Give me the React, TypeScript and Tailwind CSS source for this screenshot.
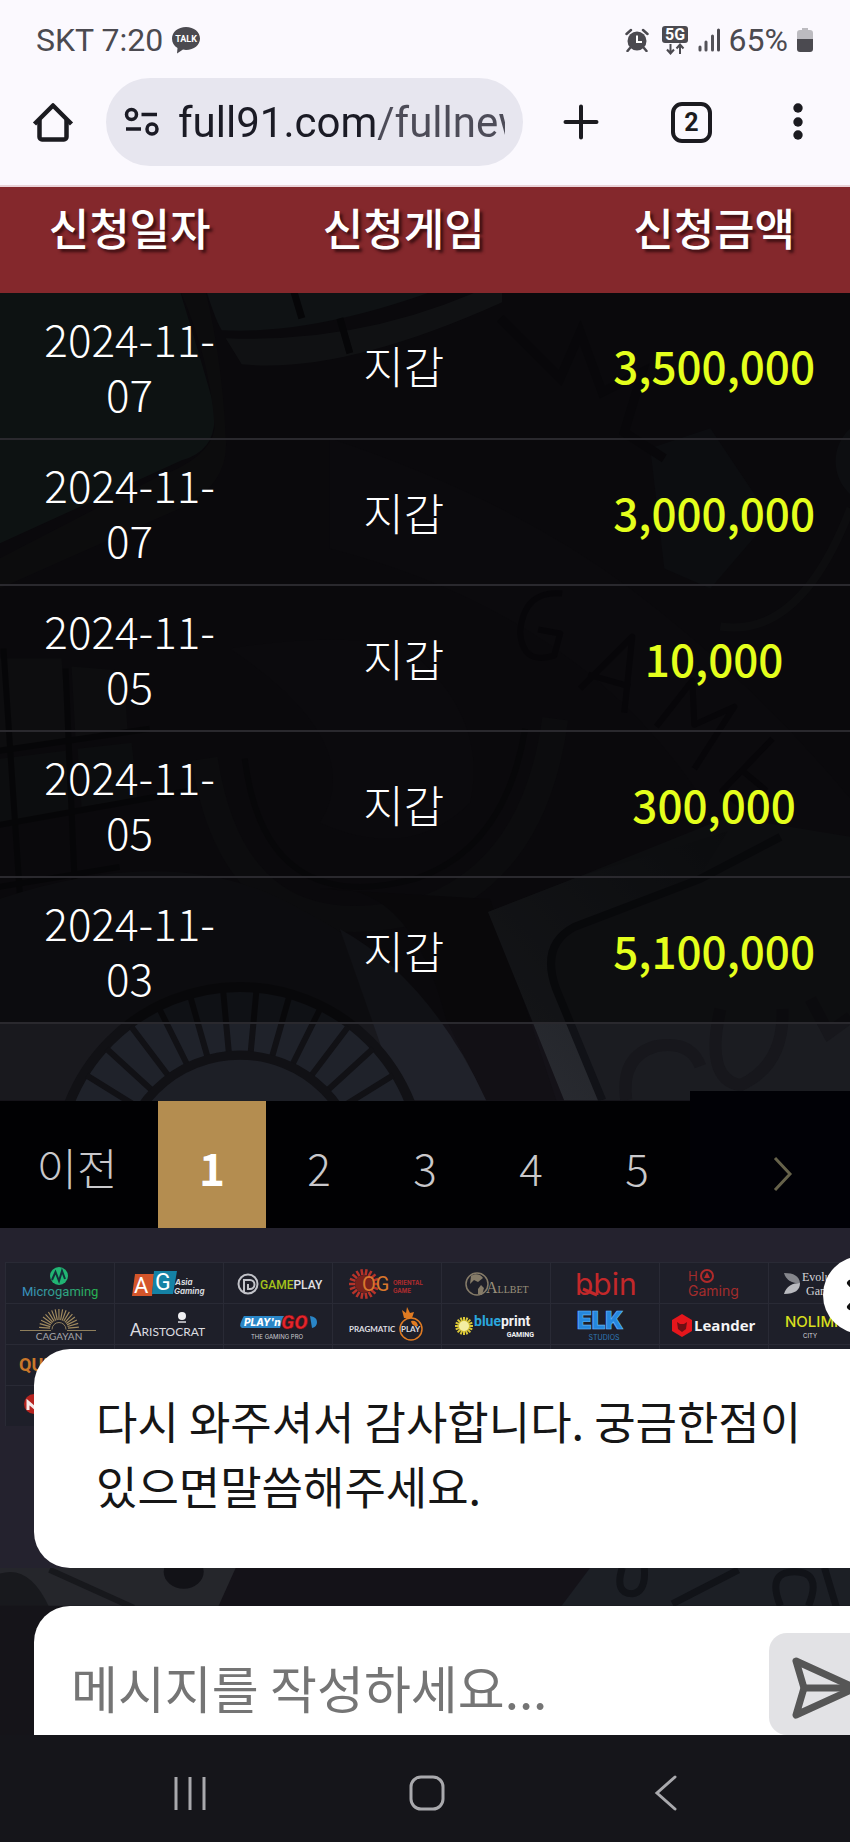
import { memo } from 'react';
import type React from 'react';

interface RequestRow {
  id: number;
  date: string;
  game: string;
  amount: string;
}

const rows: RequestRow[] = [
  { id: 1, date: '2024-11-07', game: '지갑', amount: '3,500,000' },
  { id: 2, date: '2024-11-07', game: '지갑', amount: '3,000,000' },
  { id: 3, date: '2024-11-05', game: '지갑', amount: '10,000' },
  { id: 4, date: '2024-11-05', game: '지갑', amount: '300,000' },
  { id: 5, date: '2024-11-03', game: '지갑', amount: '5,100,000' },
];

const pages = [2, 3, 4, 5];

const rays = (count: number, cx: number, cy: number, inner: number, outer: number, from = 0, to = 360) =>
  Array.from({ length: count }, (_, i) => {
    const a = ((from + ((to - from) * i) / count) * Math.PI) / 180;
    const c = Math.cos(a);
    const s = Math.sin(a);
    return `M${(cx + inner * c).toFixed(1)} ${(cy + inner * s).toFixed(1)}L${(cx + outer * c).toFixed(1)} ${(cy + outer * s).toFixed(1)}`;
  }).join('');

/* ---------- status bar ---------- */

const StatusBar = memo(() => (
  <div className="flex h-[68px] items-center px-9 pt-3 font-['Roboto',sans-serif] text-[32px] text-[#4b4a50]">
    <span>SKT 7:20</span>
    <svg className="ml-2 h-7 w-[30px]" viewBox="0 0 30 28" aria-label="TALK" role="img">
      <path d="M15 1C7 1 1 6 1 12.500c0 4 2 7.500 5.500 9.500L6 27.500l6-4 3 .5c8 0 14-5 14-11.500S23 1 15 1Z" fill="#4b4a50" />
      <text x="15" y="16" fontSize="9" fontWeight="700" textAnchor="middle" fill="#fff">
        TALK
      </text>
    </svg>
    <div className="ml-auto flex items-center">
      <svg className="h-6 w-6" viewBox="0 0 24 24" aria-hidden="true" fill="none" stroke="#4b4a50">
        <circle cx="12" cy="13" r="9.500" fill="#4b4a50" stroke="none" />
        <path d="M1.500 6 6 2M22.500 6 18 2" strokeWidth="2.500" strokeLinecap="round" />
        <path d="m5 20-2.500 3M19 20l2.500 3" strokeWidth="2.500" strokeLinecap="round" />
        <path d="M12 7.500V14h5" stroke="#fff" strokeWidth="2" />
      </svg>
      <svg className="ml-3 h-[30px] w-7" viewBox="0 0 28 30" aria-label="5G" role="img">
        <rect x="1" y="1" width="26" height="17" rx="3" fill="#4b4a50" />
        <text x="14" y="15" fontSize="16" fontWeight="700" textAnchor="middle" fill="#fff">
          5G
        </text>
        <path d="M9.500 19v9m-3.500-3.500 3.500 4 3.500-4M19 29v-9m-3.500 3.500 3.500-4 3.500 4" fill="none" stroke="#4b4a50" strokeWidth="2" />
      </svg>
      <svg className="ml-2 h-6 w-6" viewBox="0 0 24 24" aria-hidden="true" stroke="#4b4a50" strokeWidth="3" strokeLinecap="round">
        <path d="M3 19v3M9 14v8M15.500 8v14" strokeOpacity=".95" />
        <path d="M21.500 2v20" />
      </svg>
      <span className="ml-2">65%</span>
      <svg className="ml-2 h-6 w-[18px]" viewBox="0 0 18 24" aria-hidden="true">
        <path d="M6 0h6v2h2a3 3 0 0 1 3 3v7H1V5a3 3 0 0 1 3-3h2Z" fill="#bcbbc0" />
        <path d="M1 11h16v10a3 3 0 0 1-3 3H4a3 3 0 0 1-3-3Z" fill="#4b4a50" />
      </svg>
    </div>
  </div>
));

StatusBar.displayName = 'StatusBar';

/* ---------- browser toolbar ---------- */

const BrowserBar = memo(() => (
  <div className="flex items-center pt-[10px] pr-9 pb-[19px] pl-8">
    <button type="button" aria-label="홈" className="shrink-0">
      <svg className="size-[42px]" viewBox="0 0 42 42" fill="none" stroke="#1b1b20" strokeWidth="4.500">
        <path d="M2.500 23 21 4.500 39.500 23" strokeLinejoin="round" />
        <path d="M7.500 18.500V36a2.500 2.500 0 0 0 2.500 2.500h22a2.500 2.500 0 0 0 2.500-2.500V18.500" />
      </svg>
    </button>
    <label className="ml-8 flex h-[88px] min-w-0 flex-1 items-center rounded-full bg-[#e7e6ef] pr-[18px] pl-[18px]">
      <svg className="h-[30px] w-9 shrink-0" viewBox="0 0 36 30" fill="none" stroke="#1b1b25" strokeWidth="3.500" aria-hidden="true">
        <circle cx="7.500" cy="7.500" r="5" />
        <path d="M17.500 7.500H33M2 22h15" />
        <circle cx="28" cy="22" r="5" />
      </svg>
      <input
        type="text"
        aria-label="주소"
        defaultValue="full91.com/fullnew"
        className="ml-[18px] w-full min-w-0 bg-[linear-gradient(90deg,#1b1b25_197px,#4d4c58_202px)] bg-clip-text font-['Roboto',sans-serif] text-[42px] text-transparent outline-none"
      />
    </label>
    <button type="button" aria-label="새 탭" className="ml-10 shrink-0">
      <svg className="size-9" viewBox="0 0 36 36" stroke="#1b1b20" strokeWidth="4" strokeLinecap="round">
        <path d="M18 2.500v31M2.500 18h31" />
      </svg>
    </button>
    <button
      type="button"
      className="ml-[72px] flex size-[41px] shrink-0 items-center justify-center rounded-[11px] border-4 border-[#1b1b20] font-['Roboto',sans-serif] text-[25px] leading-none font-bold text-[#1b1b20]"
    >
      2
    </button>
    <button type="button" aria-label="메뉴" className="ml-[72px] shrink-0">
      <svg className="h-10 w-[30px]" viewBox="0 0 30 40" fill="#1b1b20">
        <circle cx="14" cy="6" r="4.700" />
        <circle cx="14" cy="20" r="4.700" />
        <circle cx="14" cy="33" r="4.700" />
      </svg>
    </button>
  </div>
));

BrowserBar.displayName = 'BrowserBar';

/* ---------- page artwork behind everything ---------- */

const Backdrop = memo(() => (
  <svg
    className="absolute inset-0 h-full w-full"
    viewBox="0 187 850 1548"
    preserveAspectRatio="xMidYMin slice"
    aria-hidden="true"
  >
    <defs>
      <linearGradient id="card-edge" x1="0" x2="1" y1="1" y2="0">
        <stop stopColor="#2b2d33" />
        <stop offset="1" stopColor="#17191d" />
      </linearGradient>
    </defs>
    <rect y="187" width="850" height="1548" fill="#141218" />
    <path d="M0 260h170q25 80 42 140 12 50-30 62L0 545Z" fill="#1b2425" />
    <path d="M170 270q40 80 45 160-4 30-60 50L0 560v30l180-80q50-24 46-70-4-90-26-170Z" fill="#19181b" />
    <path d="M200 270q14 50 22 62 110 6 270-62Z" fill="#1e2428" />
    <path d="m226 340 16 26q100 10 260-62v-22q-130 64-276 58Z" fill="#212327" />
    <path d="m290 280 12 40m38 0 10 35" stroke="#0c0c10" strokeWidth="7" />
    <path d="m650 450 60-20 60 90-60 70-46-20Z" fill="#181a20" />
    <path d="M850 430a44 44 0 0 0 0 66Z" fill="#1b1d23" />
    <path d="m500 320 60 60 20-46 22 60 40-20-18 60 40 26" fill="none" stroke="#100f14" strokeWidth="9" />
    <path d="M850 510q-50 130-130 118" fill="none" stroke="#1b1b1f" strokeWidth="8" />
    <path d="M330 440q180 60 300 150t220 210v100q-70-10-130-70-120-210-390-280Z" fill="#16141a" />
    <g fill="none" stroke="#0e0c12" strokeWidth="6" strokeLinejoin="round">
      <path d="M562 595q-38-4-42 38 2 34 34 24l6-22-22-4" />
      <path d="m580 690 52-52-8 76m-36-38 42 12" />
      <path d="m656 728 36-46 2 44 40-18-40 62" />
      <path d="m772 740-50 52 34 26m-14-46 24 20" />
    </g>
    <path d="M230 650q80-14 170-6 90 70 70 160-60 60-150 20 50-80-90-174Z" fill="#16141a" />
    <path d="M205 760q30 200 220 150 110-40 130-190" fill="none" stroke="#18181c" strokeWidth="26" />
    <path d="M245 760q20 160 170 120 90-30 110-150" fill="none" stroke="#0f0e12" strokeWidth="6" />
    <path d="M0 660h62l6 82-68 10ZM72 668l52 4 4 60-52 8Z" fill="#1a1a1e" />
    <path d="M0 760 66 752l4 64-70 10ZM78 750l54-6 6 56-56 8Z" fill="#191a1e" />
    <g stroke="#0d0d10" strokeWidth="6" fill="none">
      <path d="M4 650 28 1010M66 670l14 330" />
      <path d="m0 752 150-22M0 826l190-34M0 888l120-20" />
    </g>
    <path d="M0 1101V900q180-60 300 10 120 60 190 191Z" fill="#19191e" />
    <path d="M320 890q90-10 126 130l40 81h70L490 900Z" fill="#121015" />
    <path d="M340 930q90 50 146 171H400Z" fill="#20222a" />
    <circle cx="240" cy="1171" r="183" fill="#1f222a" stroke="#111115" strokeWidth="10" />
    <path d={rays(34, 240, 1171, 118, 180)} stroke="#111115" strokeWidth="6" />
    <circle cx="240" cy="1175" r="119" fill="#1d1f26" stroke="#111115" strokeWidth="9" />
    <path d="m488 913 90-35 150-60 122 20v263H570Z" fill="#1b1c21" />
    <path d="m488 913 90-35 150-46-30 48-130 50q-30 16-10 60l44 111h-38Z" fill="url(#card-edge)" />
    <path d="m780 838-80 42-126 48q-34 18-18 62l46 111" fill="none" stroke="#111217" strokeWidth="8" />
    <g fill="none" stroke="#17171c" strokeWidth="12">
      <path d="M626 1101q-6-44 30-54 34-6 44 20" />
      <path d="M720 1010q-16 70 20 76 44-20 42-76" />
      <path d="m810 1000 18 34 22-16" />
    </g>
    <path d="M0 1568h236l-18 40H0Z" fill="#25262b" />
    <path d="M0 1574q30-10 50 34H0Z" fill="#18191d" />
    <path d="m50 1570 84 38" stroke="#17181c" strokeWidth="6" />
    <ellipse cx="184" cy="1572" rx="20" ry="17" fill="#121217" />
    <path d="M590 1568h260v40H560Z" fill="#1c1f25" />
    <path d="M622 1568q-8 26 10 26 14-2 12-26M738 1570l-66 34M780 1606q-14-34 14-34t14 34M824 1568l12 40" fill="none" stroke="#111318" strokeWidth="7" />
    <path d="M0 1606h850v129H0Z" fill="#151419" />
  </svg>
));

Backdrop.displayName = 'Backdrop';

/* ---------- request history ---------- */

const HistoryTable = memo(() => (
  <table className="relative w-full table-fixed border-collapse text-center text-[44px] leading-[55px]">
    <colgroup>
      <col className="w-[30.5%]" />
      <col className="w-[34%]" />
      <col />
    </colgroup>
    <thead>
      <tr className="h-[107px] border-t-2 border-[#e9d3d8] bg-[#84282c] align-top text-white [text-shadow:3px_3px_3px_#3d0f12]">
        <th scope="col" className="pt-[13px] font-medium">
          신청일자
        </th>
        <th scope="col" className="pt-[13px] font-medium">
          신청게임
        </th>
        <th scope="col" className="pt-[13px] pl-[30px] font-medium">
          신청금액
        </th>
      </tr>
    </thead>
    <tbody className="bg-black/50">
      {rows.map((row) => (
        <tr key={row.id} className="h-[146px] border-b-2 border-[#2a292e]">
          <td className="px-10 font-light text-white">{row.date}</td>
          <td className="font-light text-white">{row.game}</td>
          <td className="pl-[30px] font-medium text-[#e4ff1c]">{row.amount}</td>
        </tr>
      ))}
    </tbody>
  </table>
));

HistoryTable.displayName = 'HistoryTable';

const Pagination = memo(() => (
  <nav aria-label="페이지" className="relative mt-[67px] flex items-end text-[44px] font-light text-[#c9c8cb]">
    <div className="flex h-[127px] flex-1 items-stretch bg-[#010103]">
      <a href="#prev" className="flex w-[158px] items-center justify-center pt-1 pr-1">
        이전
      </a>
      <a href="#1" aria-current="page" className="flex w-[108px] items-center justify-center bg-[#b48d50] pt-1 font-bold text-white">
        1
      </a>
      {pages.map((page) => (
        <a key={page} href={`#${page}`} className="flex w-[106px] items-center justify-center pt-1">
          {page}
        </a>
      ))}
    </div>
    <a href="#next" aria-label="다음" className="flex h-[137px] w-[162px] items-center justify-center bg-[#010106] pt-7 pl-[26px]">
      <svg className="h-9 w-6" viewBox="0 0 24 36" fill="none" stroke="#66624a" strokeWidth="3">
        <path d="m4 2 15 16L4 34" />
      </svg>
    </a>
  </nav>
));

Pagination.displayName = 'Pagination';

/* ---------- provider logos ---------- */

interface LogoProps {
  name: string;
  children?: React.ReactNode;
}

const Logo = ({ name, children }: LogoProps) => (
  <li className="h-[41px] border-t border-l border-[#292a35]">
    <svg className="h-[41px] w-[109px]" viewBox="0 0 109 41" role="img" aria-label={name}>
      {children}
    </svg>
  </li>
);

const sans = 'Roboto, sans-serif';
const wide = 'Inter, sans-serif';
const serif = '"Liberation Serif", serif';
const lato = 'Lato, sans-serif';

const ProviderLogos = memo(() => (
  <ul className="grid w-max grid-cols-[repeat(8,109px)] bg-[#1e1f29]">
    <Logo name="Microgaming">
      <defs>
        <linearGradient id="mg">
          <stop stopColor="#3a8fc4" />
          <stop offset="1" stopColor="#27b34c" />
        </linearGradient>
      </defs>
      <circle cx="53" cy="13" r="9" fill="#21b573" />
      <path d="m46 17 3.500-8 3.500 9 3-10 3 8" fill="none" stroke="#14303a" strokeWidth="2" />
      <text x="16" y="33" fontSize="13" fontFamily={sans} fill="url(#mg)">
        Microgaming
      </text>
    </Logo>
    <Logo name="Asia Gaming">
      <path d="M20 11h19l-2 22H17Z" fill="#d4552a" />
      <path d="M39 8h23l-4 23H37Z" fill="#1582a5" />
      <text x="19" y="30" fontSize="22" fontFamily={sans} fill="#fff">
        A
      </text>
      <text x="40" y="27" fontSize="23" fontFamily={sans} fill="#fff">
        G
      </text>
      <g fontSize="8" fontWeight="700" fontStyle="italic" fontFamily={wide} fill="#d7d9de">
        <text x="60" y="22">
          Asia
        </text>
        <text x="59" y="31">
          Gaming
        </text>
      </g>
    </Logo>
    <Logo name="Gameplay">
      <circle cx="24" cy="21" r="9.500" fill="none" stroke="#c2c3c9" strokeWidth="2" />
      <path d="M20 29V17h6a4 4 0 0 1 0 9h-2v-5" fill="none" stroke="#c2c3c9" strokeWidth="2" />
      <text x="36" y="26" fontSize="12" fontWeight="500" fontFamily={sans} fill="#a5c41b">
        GAME
        <tspan fill="#e0e0e4">PLAY</tspan>
      </text>
    </Logo>
    <Logo name="Oriental Game">
      <path d={rays(18, 31, 21, 9, 15)} stroke="#b8332a" strokeWidth="2.500" />
      <circle cx="31" cy="21" r="9" fill="#7a221c" />
      <text x="29" y="28" fontSize="20" fontFamily={sans} fill="#d9772c">
        OG
      </text>
      <g fontSize="6" fontWeight="700" fontFamily={wide} fill="#b02c2e">
        <text x="60" y="22">
          ORIENTAL
        </text>
        <text x="60" y="30">
          GAME
        </text>
      </g>
    </Logo>
    <Logo name="Allbet">
      <circle cx="35" cy="21" r="11" fill="none" stroke="#857b68" strokeWidth="1.500" />
      <path d="M29 13c4-3 10-2 12 2l-5 4-4-2-4 4ZM36 26l3-4 3 3-2 7-4-1Z" fill="#857b68" />
      <text x="44" y="30" fontFamily={serif} fill="#9b917b">
        <tspan fontSize="16">A</tspan>
        <tspan fontSize="10">LLBET</tspan>
      </text>
    </Logo>
    <Logo name="bbin">
      <text x="24" y="32" fontSize="30" fontFamily={wide} fill="#c3282a">
        bbin
      </text>
      <path d="M32 26 46 32" stroke="#c3282a" strokeWidth="3" />
    </Logo>
    <Logo name="HO Gaming">
      <g fontFamily={wide} fill="#a32c2c">
        <text x="28" y="18" fontSize="13">
          H
        </text>
        <text x="28" y="33" fontSize="14">
          Gaming
        </text>
      </g>
      <circle cx="47" cy="13" r="6" fill="none" stroke="#b02a2a" strokeWidth="2" />
      <path d="m47 9 3 6h-6Z" fill="#b02a2a" />
    </Logo>
    <Logo name="Evolution Gaming">
      <path d="M15 10c10 0 15 3 16 10-6 1-14-2-16-10Z" fill="#85868c" />
      <path d="M31 20c0 7-5 11-16 11 2-8 9-11 16-11Z" fill="#b9babf" />
      <g fontSize="12" fontFamily={serif} fill="#d5d5d8">
        <text x="33" y="18">
          Evolution
        </text>
        <text x="37" y="32">
          Gaming
        </text>
      </g>
    </Logo>

    <Logo name="Cagayan">
      <path d={rays(17, 53, 25, 9, 20, 185, 365)} stroke="#a08a5e" strokeWidth="1.200" />
      <path d="M46 25.500a7 7 0 0 1 14 0M14 26.500h31M61 26.500h29" fill="none" stroke="#8f7f5c" />
      <text x="53" y="36" fontSize="10" textAnchor="middle" fontFamily={lato} fill="#a5a6ab">
        CAGAYAN
      </text>
    </Logo>
    <Logo name="Aristocrat">
      <text x="15" y="32" fontSize="12" fontFamily={lato} fill="#dcdce0">
        <tspan fontSize="17">A</tspan>RISTOCRAT
      </text>
      <circle cx="67" cy="12" r="4" fill="#f0f0f2" />
      <path d="M63 18h8" stroke="#dcdce0" strokeWidth="1.500" />
    </Logo>
    <Logo name="Play'n GO">
      <path d="M20 12h40l-4 12H18q-3-1-1-6t3-6Z" fill="#2a86c7" />
      <path d="M86 12q7 1 7 6t-5 6Z" fill="#2a86c7" />
      <text x="20" y="22" fontSize="10" fontWeight="800" fontStyle="italic" fontFamily={wide} fill="#fff">
        PLAY'n
      </text>
      <text x="57" y="25" fontSize="20" fontWeight="900" fontStyle="italic" fontFamily={sans} fill="#e5252b" stroke="#5c0c10" strokeWidth=".5">
        GO
      </text>
      <text x="27" y="35" fontSize="6" fontFamily={wide} fill="#c9cacf">
        THE GAMING PRO
      </text>
    </Logo>
    <Logo name="Pragmatic Play">
      <g fontSize="8" fontWeight="700" fontFamily={lato} fill="#dedee2">
        <text x="16" y="28">
          PRAGMATIC
        </text>
        <text x="68" y="28">
          PLAY
        </text>
      </g>
      <circle cx="78" cy="25" r="11" fill="none" stroke="#e07b22" strokeWidth="1.500" />
      <path d="m69 6 4 3 1-6 3 6 4-1-2 6h-8Z" fill="#e07b22" />
      <path d="M78 17q6-1 7 5-6 1-7-5Z" fill="#e07b22" />
    </Logo>
    <Logo name="Blueprint Gaming">
      <path d={rays(16, 22, 22, 4, 9)} stroke="#d9c637" strokeWidth="2" />
      <circle cx="22" cy="22" r="5" fill="#f3eda2" />
      <text x="32" y="22" fontSize="14" fontWeight="700" fontFamily={sans} fill="#2ba6dc">
        blue
        <tspan fill="#f1f1f4">print</tspan>
      </text>
      <text x="92" y="33" fontSize="7" fontWeight="700" textAnchor="end" fontFamily={sans} fill="#f1f1f4">
        GAMING
      </text>
    </Logo>
    <Logo name="ELK Studios">
      <text x="26" y="25" fontSize="24" fontWeight="900" fontFamily={wide} fill="#2587dd" stroke="#63b8ff" strokeWidth=".7">
        ELK
      </text>
      <text x="53" y="36" fontSize="7" textAnchor="middle" fontFamily={wide} fill="#2f79b8">
        STUDIOS
      </text>
    </Logo>
    <Logo name="Leander">
      <path d="m22 10 10 6v11l-10 6-10-6V16Z" fill="#e5161c" />
      <path d="m17 18 3 2h4l3-2-1 7-4 3-4-3Z" fill="#6d0f14" />
      <text x="34" y="27" fontSize="15" fontWeight="700" fontFamily={'"Open Sans", sans-serif'} fill="#f4f4f6">
        Leander
      </text>
    </Logo>
    <Logo name="Nolimit City">
      <text x="16" y="23" fontSize="15" fontWeight="500" fontFamily={wide} fill="#d7de1e">
        NOLIMIT
      </text>
      <text x="34" y="34" fontSize="6" fontFamily={wide} fill="#dadade">
        CITY
      </text>
    </Logo>

    <Logo name="Quickspin">
      <text x="13" y="26" fontSize="18" fontWeight="700" fontFamily={sans} fill="#c9772a">
        QUICKSPIN
      </text>
    </Logo>
    {['a', 'b', 'c', 'd', 'e', 'f', 'g'].map((key) => (
      <li key={key} className="border-t border-l border-[#292a35]" />
    ))}
    <Logo name="Netent">
      <circle cx="28" cy="18" r="10" fill="#b5231f" />
      <path d="M22 24v-8l8 7v-9" fill="none" stroke="#f5e9e9" strokeWidth="3" />
    </Logo>
    {['h', 'i', 'j', 'k', 'l', 'm', 'n'].map((key) => (
      <li key={key} className="border-t border-l border-[#292a35]" />
    ))}
  </ul>
));

ProviderLogos.displayName = 'ProviderLogos';

/* ---------- chat widget ---------- */

const ChatWidget = memo(() => (
  <section aria-label="채팅" className="absolute right-0 bottom-0 left-[34px]">
    <button
      type="button"
      aria-label="닫기"
      className="absolute -top-[93px] -right-[51px] flex size-[78px] items-center justify-center rounded-full bg-white"
    >
      <svg className="size-8" viewBox="0 0 32 32" stroke="#111" strokeWidth="6" strokeLinecap="round">
        <path d="m4 4 24 24M28 4 4 28" />
      </svg>
    </button>
    <p className="h-[219px] rounded-l-[36px] bg-white pt-[39px] pr-8 pl-[62px] text-[45px] leading-[65px] break-keep text-[#161616]">
      다시 와주셔서 감사합니다. 궁금한점이 있으면말씀해주세요.
    </p>
    <form className="mt-[38px] flex h-[129px] items-end rounded-tl-[36px] bg-white pl-[37px]">
      <input
        type="text"
        aria-label="메시지"
        placeholder="메시지를 작성하세요..."
        className="h-[97px] min-w-0 flex-1 text-[51px] text-[#161616] outline-none placeholder:text-[#757575]"
      />
      <button
        type="button"
        aria-label="보내기"
        className="flex h-[102px] w-[81px] items-center overflow-hidden rounded-l-[18px] bg-[#e2e2e5] pt-2 pl-[22px]"
      >
        <svg className="size-16 shrink-0" viewBox="0 0 64 64" fill="none" stroke="#565656" strokeWidth="7" strokeLinejoin="round" strokeLinecap="round">
          <path d="M5 5 64 32 5 59l8-27Z" />
          <path d="M13 32h48" />
        </svg>
      </button>
    </form>
  </section>
));

ChatWidget.displayName = 'ChatWidget';

const SystemNav = memo(() => (
  <nav aria-label="시스템" className="flex flex-1 items-center justify-between bg-[#15151a] pt-2 pr-[165px] pl-[168px]">
    <button type="button" aria-label="최근 앱">
      <svg className="h-9 w-11" viewBox="0 0 44 36" stroke="#a9a9ad" strokeWidth="3">
        <path d="M8 2v33M22 2v33M36 2v33" />
      </svg>
    </button>
    <button type="button" aria-label="홈 화면">
      <svg className="size-9" viewBox="0 0 36 36" fill="none" stroke="#a9a9ad" strokeWidth="3">
        <rect x="2" y="2" width="32" height="32" rx="10" />
      </svg>
    </button>
    <button type="button" aria-label="뒤로">
      <svg className="h-9 w-11" viewBox="0 0 44 36" fill="none" stroke="#a9a9ad" strokeWidth="3" strokeLinecap="round">
        <path d="M34 2 16 18l18 16" />
      </svg>
    </button>
  </nav>
));

SystemNav.displayName = 'SystemNav';

export default function App() {
  return (
    <div className="flex min-h-screen flex-col bg-[#15151a] font-['Noto_Sans_CJK_KR',sans-serif]">
      <header className="bg-[#fbf9fe]">
        <StatusBar />
        <BrowserBar />
      </header>
      <main className="relative overflow-hidden pb-[167px]">
        <Backdrop />
        <HistoryTable />
        <Pagination />
        <footer className="relative h-[340px] overflow-hidden bg-[#24222e] pt-[34px] pl-[5px]">
          <ProviderLogos />
        </footer>
        <ChatWidget />
      </main>
      <SystemNav />
    </div>
  );
}
